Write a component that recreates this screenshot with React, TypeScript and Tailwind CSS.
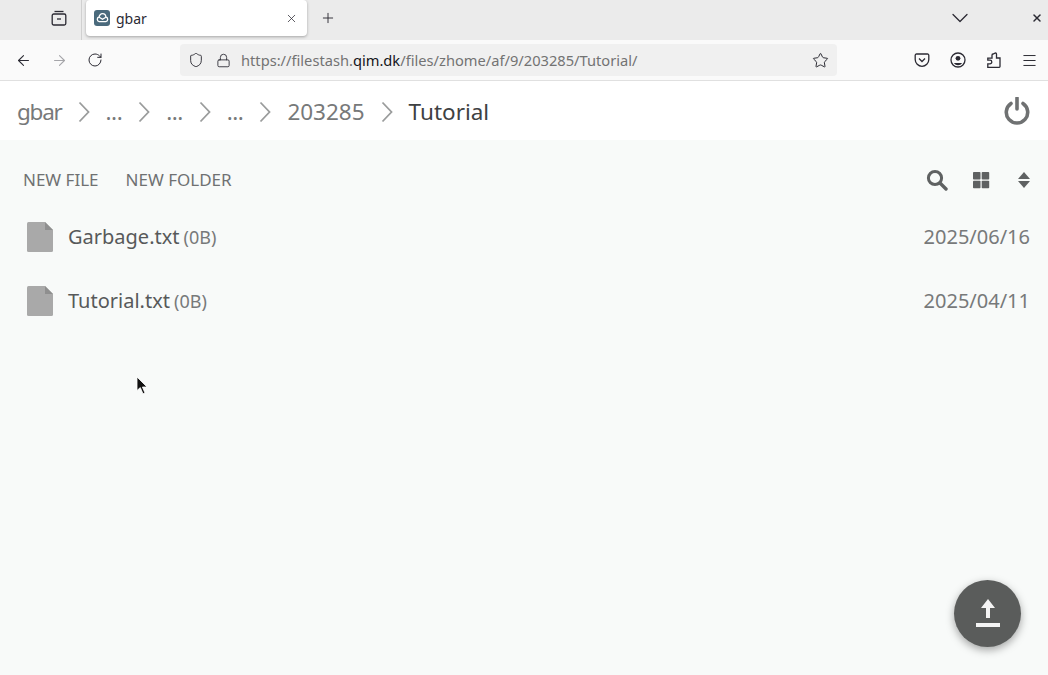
import React from 'react';
import {ArrowLeft, ArrowRight, ChevronDown, Menu, Plus, RotateCw, Shield, Lock, Star, X} from 'lucide-react';

const Crumb = ({label, dark}: {label: string; dark?: boolean}) => (
  <span className={dark ? 'pt-[4px] text-[#3e4142]' : 'pt-[4px] text-[#77797a]'}>{label}</span>
);

const Dots = () => <span className="pt-[4px] tracking-[-0.5px] text-[#77797a]">...</span>;

const Sep = () => (
  <svg width="12" height="22" viewBox="0 0 12 22" fill="none" className="mx-[16px] mt-[3px] shrink-0">
    <path d="M1.5 1.5 L10.5 11 L1.5 20.5" stroke="#9a9c9c" strokeWidth="1.8" />
  </svg>
);

const FileIcon = () => (
  <svg width="26" height="30" viewBox="0 0 26 30" className="shrink-0">
    <path d="M0 1.5 Q0 0 1.5 0 H18 L26 8 V28.5 Q26 30 24.5 30 H1.5 Q0 30 0 28.5 Z" fill="#a9a9a9" />
    <path d="M18 0 L26 8 H18 Z" fill="#8f8f8f" />
  </svg>
);

const FileRow = ({name, date}: {name: string; date: string}) => (
  <div className="flex h-16 items-center pr-[18px] pl-[27px]">
    <FileIcon />
    <span className="ml-[15px] text-[20px] text-[#57595a]">{name}</span>
    <span className="ml-[4px] text-[18px] text-[#77797a]">(0B)</span>
    <span className="ml-auto text-[20px] text-[#77797a]">{date}</span>
  </div>
);

export default function App(): React.JSX.Element {
  return (
    <div className="flex h-[675px] w-[1048px] flex-col overflow-hidden bg-[#f8faf9] font-['Noto_Sans',sans-serif]">
      {/* Tab strip */}
      <div className="flex h-10 shrink-0 items-center bg-[#ebebeb] pb-1">
        <div className="-mb-1 flex h-10 w-[82px] items-center justify-end border-r border-[#d0d0d0] pr-[14px] pb-1">
          <svg width="16" height="16" viewBox="0 0 16 16" fill="none" stroke="#2b2a33" strokeWidth="1.3">
            <path d="M3.5 1.5 H12.5" />
            <rect x="1.2" y="4" width="13.6" height="11" rx="1.5" />
            <path d="M6 9 H10" />
          </svg>
        </div>
        <div className="ml-1 flex h-[36px] w-[221px] items-center rounded bg-white pr-[9px] pl-2 shadow-[0_1px_3px_rgba(0,0,0,0.3)]">
          <div className="flex h-4 w-4 items-center justify-center rounded-[3px] bg-[#4a6a7c]">
            <svg width="13" height="10" viewBox="0 0 13 10" fill="none" stroke="white" strokeWidth="1.3">
              <path d="M3.2 8.7 A2.4 2.4 0 0 1 3.2 4 A3.3 3.3 0 0 1 9.8 4 A2.4 2.4 0 0 1 9.8 8.7 Z" />
              <path d="M3.2 4.2 L6.5 6.2 L9.8 4.2" />
            </svg>
          </div>
          <span className="ml-[6px] text-[14px] text-[#2b2a33]">gbar</span>
          <X size={13} strokeWidth={1.4} className="ml-auto text-[#2b2a33]" />
        </div>
        <Plus size={16} strokeWidth={1.4} className="ml-[13px] text-[#2b2a33]" />
        <ChevronDown size={28} strokeWidth={1.1} className="mr-[57px] ml-auto text-[#2b2a33]" />
        <X size={12} strokeWidth={3} className="mr-[5px] text-[#2b2a33]" />
      </div>

      {/* Navigation bar */}
      <div className="flex h-[41px] shrink-0 items-center border-b border-[#e0e0e0] bg-[#fafafa]">
        <ArrowLeft size={17} strokeWidth={1.5} className="ml-[15px] text-[#2b2a33]" />
        <ArrowRight size={17} strokeWidth={1.5} className="ml-[19px] text-[#a5a5a9]" />
        <RotateCw size={16} strokeWidth={1.5} className="ml-[19px] text-[#2b2a33]" />
        <div className="ml-[77px] flex h-8 w-[657px] items-center rounded bg-[#f0f0f0] pr-2 pl-2">
          <Shield size={16} strokeWidth={1.4} className="text-[#2b2a33]" />
          <Lock size={15} strokeWidth={1.4} className="ml-3 text-[#2b2a33]" />
          <span className="ml-[10px] text-[14.67px] text-[#737373]">
            https://filestash.<span className="text-[#15141a]">qim.dk</span>/files/zhome/af/9/203285/Tutorial/
          </span>
          <Star size={17} strokeWidth={1.4} className="ml-auto text-[#2b2a33]" />
        </div>
        <svg width="16" height="16" viewBox="0 0 16 16" fill="none" stroke="#2b2a33" strokeWidth="1.3" className="ml-[77px]">
          <path d="M2.5 2 H13.5 A1.3 1.3 0 0 1 14.8 3.3 V7.5 A6.8 6.8 0 0 1 1.2 7.5 V3.3 A1.3 1.3 0 0 1 2.5 2 Z" />
          <path d="M5 6.5 L8 9.5 L11 6.5" />
        </svg>
        <svg width="16" height="16" viewBox="0 0 16 16" className="ml-[20px]">
          <circle cx="8" cy="8" r="7" fill="none" stroke="#2b2a33" strokeWidth="1.3" />
          <circle cx="8" cy="6.3" r="2.4" fill="#2b2a33" />
          <path d="M3.8 11 H12.2 Q10.5 13.2 8 13.2 Q5.5 13.2 3.8 11 Z" fill="#2b2a33" />
        </svg>
        <svg width="16" height="16" viewBox="0 0 16 16" fill="none" stroke="#2b2a33" strokeWidth="1.3" className="ml-[20px]">
          <path d="M1.8 15.3 V11.8 H4 A1.8 1.8 0 0 0 4 8.2 H1.8 V6.2 H6 V3.2 A1.2 1.2 0 0 1 7 2 L9.5 1 A1 1 0 0 1 10.5 2 V6 H14 V14.5 A0.8 0.8 0 0 1 13.2 15.3 Z" />
        </svg>
        <Menu size={17} strokeWidth={1.4} className="ml-[19px] text-[#2b2a33]" />
      </div>

      {/* Breadcrumb */}
      <div className="flex h-[59px] shrink-0 items-center bg-white pr-[18px] pl-[17px] text-[22.5px] leading-none">
        <span className="pt-[4px] tracking-[-1.25px] text-[#77797a]">gbar</span>
        <Sep />
        <Dots />
        <Sep />
        <Dots />
        <Sep />
        <Dots />
        <Sep />
        <Crumb label="203285" />
        <Sep />
        <Crumb label="Tutorial" dark />
        <svg width="26" height="28" viewBox="0 0 26 28" fill="none" stroke="#6f7172" strokeWidth="3.6" className="ml-auto">
          <path d="M13 1 V12" strokeLinecap="round" />
          <path d="M7 6.5 A10.7 10.7 0 1 0 19 6.5" strokeLinecap="round" />
        </svg>
      </div>

      {/* Content */}
      <div className="relative flex-1">
        <div className="flex h-[65px] items-center pt-[15px] pr-[18px] pl-[23px] text-[17px] text-[#6f7172]">
          <span>NEW FILE</span>
          <span className="ml-[27px]">NEW FOLDER</span>
          <svg width="22" height="22" viewBox="0 0 22 22" fill="none" stroke="#5f6162" className="ml-auto">
            <circle cx="9" cy="9" r="6.6" strokeWidth="3" />
            <path d="M14 14 L20 20" strokeWidth="3.4" strokeLinecap="round" />
          </svg>
          <svg width="18" height="18" viewBox="0 0 18 18" fill="#5f6162" className="ml-[24px]">
            <rect x="1" y="1" width="7.5" height="7.5" rx="0.8" />
            <rect x="9.7" y="1" width="7.5" height="7.5" rx="0.8" />
            <rect x="1" y="9.7" width="7.5" height="7.5" rx="0.8" />
            <rect x="9.7" y="9.7" width="7.5" height="7.5" rx="0.8" />
          </svg>
          <svg width="12" height="18" viewBox="0 0 12 18" fill="#5f6162" className="ml-[28px]">
            <path d="M6 1 L12 8 H0 Z" />
            <path d="M0 10 H12 L6 17 Z" />
          </svg>
        </div>
        <FileRow name="Garbage.txt" date="2025/06/16" />
        <FileRow name="Tutorial.txt" date="2025/04/11" />

        {/* Upload button */}
        <div className="absolute right-[27px] bottom-[28px] flex h-[67px] w-[67px] items-center justify-center rounded-full bg-[#5a5c5b] shadow-[0_3px_8px_rgba(0,0,0,0.35)]">
          <svg width="26" height="30" viewBox="0 0 26 30" fill="#f4f4f4">
            <path d="M13 0 L20 9 H15 V19 H11 V9 H6 Z" />
            <rect x="1" y="24" width="24" height="4" />
          </svg>
        </div>

        {/* Mouse pointer */}
        <svg width="12" height="20" viewBox="0 0 12 20" className="absolute top-[236px] left-[136px]">
          <path d="M1 1 L1 14.5 L4.3 11.6 L7 17.8 L9 17 L6.4 11 L11 11 Z" fill="#111" stroke="#fff" strokeWidth="0.8" />
        </svg>
      </div>
    </div>
  );
}
